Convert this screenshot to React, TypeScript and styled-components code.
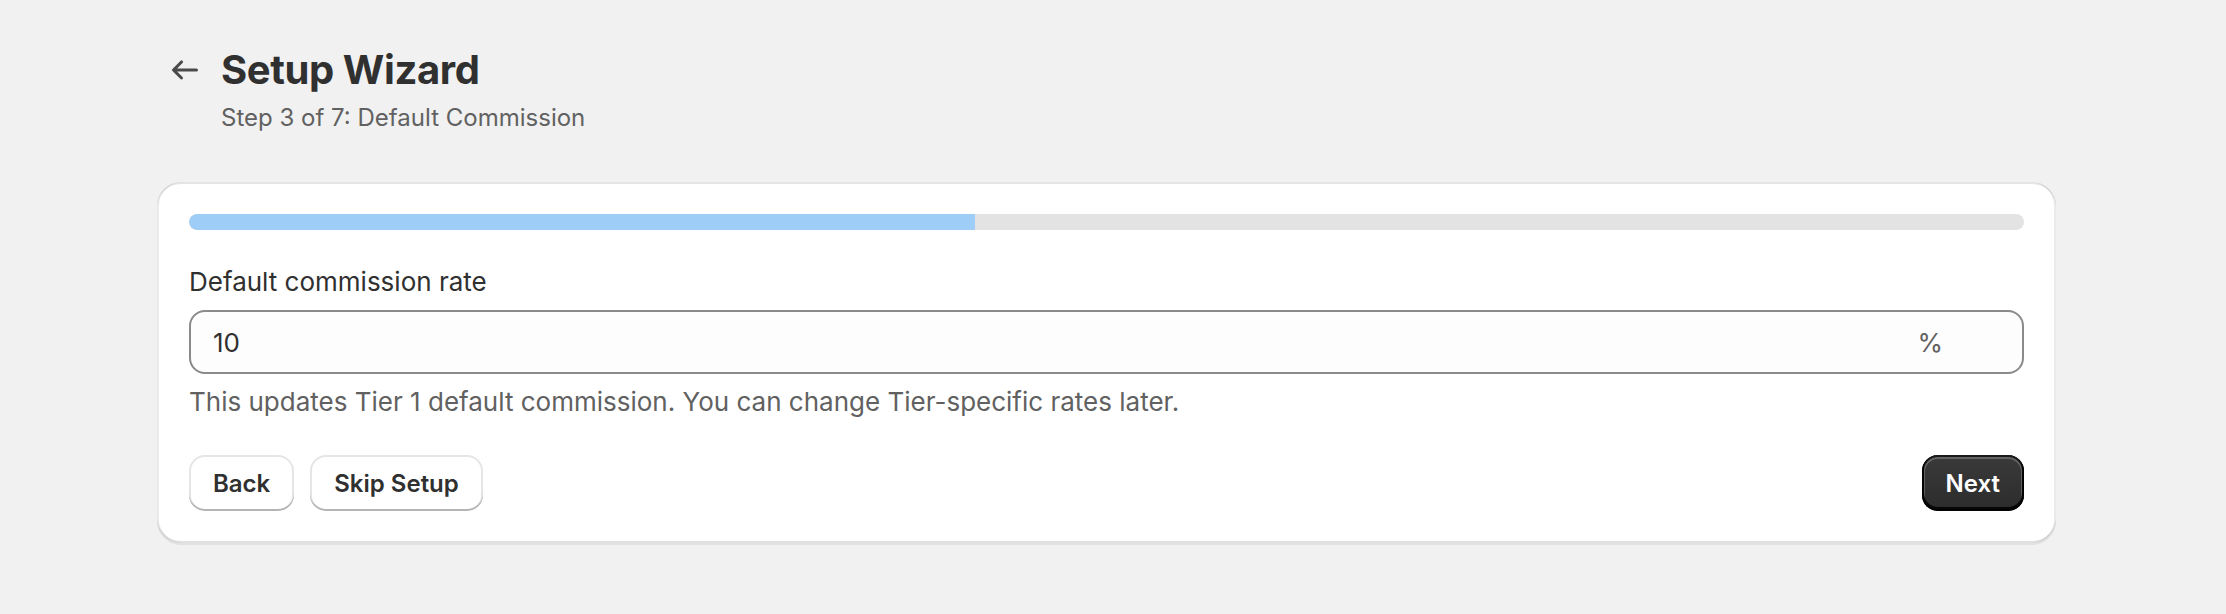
import * as React from 'react';
import styled, { createGlobalStyle } from 'styled-components';

const INK = '#303030';
const SUBDUED = '#616161';

const GlobalStyle = createGlobalStyle`
  html, body {
    margin: 0;
    padding: 0;
    background: #f1f1f1;
  }

  body {
    font-family: Inter, 'Noto Sans', 'Liberation Sans', sans-serif;
    color: ${INK};
    -webkit-font-smoothing: antialiased;
  }
`;

const Page = styled.main`
  box-sizing: border-box;
  padding: 42px 0 40px 157px;
  width: 2056px;
`;

const Header = styled.header`
  display: flex;
  align-items: flex-start;
  gap: 8px;
  margin-bottom: 48px;
`;

const BackAction = styled.button`
  display: flex;
  align-items: center;
  justify-content: center;
  width: 56px;
  height: 56px;
  padding: 0;
  border: none;
  border-radius: 16px;
  background: transparent;
  color: #4a4a4a;
  cursor: pointer;

  svg {
    width: 40px;
    height: 40px;
    fill: currentColor;
  }
`;

const TitleBlock = styled.div`
  display: flex;
  flex-direction: column;
  gap: 8px;
  margin-top: 4px;
`;

const Title = styled.h1`
  margin: 0;
  font-size: 40px;
  line-height: 48px;
  font-weight: 700;
  letter-spacing: -0.4px;
  color: ${INK};
`;

const Subtitle = styled.p`
  margin: 0;
  font-size: 24px;
  line-height: 32px;
  color: ${SUBDUED};
`;

const Card = styled.section`
  box-sizing: border-box;
  display: flex;
  flex-direction: column;
  padding: 32px;
  border-radius: 24px;
  background: #ffffff;
  box-shadow:
    0 2px 0 0 rgba(26, 26, 26, 0.07),
    inset 2px 0 0 0 rgba(0, 0, 0, 0.08),
    inset -2px 0 0 0 rgba(0, 0, 0, 0.08),
    inset 0 -2px 0 0 rgba(0, 0, 0, 0.12),
    inset 0 2px 0 0 rgba(204, 204, 204, 0.5);
`;

const Track = styled.div`
  height: 16px;
  border-radius: 8px;
  background: #e3e3e3;
  overflow: hidden;
  margin-bottom: 32px;
`;

const Fill = styled.div`
  height: 100%;
  border-radius: 8px 0 0 8px;
  background: #9ecdf8;
`;

const Field = styled.div`
  display: flex;
  flex-direction: column;
  gap: 8px;
`;

const Label = styled.label`
  font-size: 26px;
  line-height: 40px;
  color: ${INK};
`;

const InputWrap = styled.div`
  box-sizing: border-box;
  display: flex;
  align-items: center;
  height: 64px;
  padding: 0 79px 0 22px;
  border: 2px solid #8a8a8a;
  border-radius: 16px;
  background: #fdfdfd;
`;

const Input = styled.input`
  flex: 1;
  min-width: 0;
  border: none;
  outline: none;
  background: transparent;
  font-family: inherit;
  font-size: 26px;
  color: ${INK};
  padding: 0;
`;

const Suffix = styled.span`
  font-size: 26px;
  color: ${SUBDUED};
`;

const Help = styled.p`
  margin: 0;
  font-size: 26px;
  line-height: 40px;
  color: ${SUBDUED};
`;

const Actions = styled.div`
  display: flex;
  align-items: center;
  justify-content: space-between;
  margin-top: 33px;
`;

const Group = styled.div`
  display: flex;
  gap: 16px;
`;

const Button = styled.button<{ $primary?: boolean }>`
  box-sizing: border-box;
  height: 56px;
  padding: 0 24px;
  border: none;
  border-radius: 16px;
  font-family: inherit;
  font-size: 24px;
  font-weight: 600;
  cursor: pointer;
  color: ${(p) => (p.$primary ? '#ffffff' : INK)};
  background: ${(p) =>
    p.$primary ? 'linear-gradient(180deg, #3a3a3a 0%, #2c2c2c 100%)' : '#ffffff'};
  box-shadow: ${(p) =>
    p.$primary
      ? 'inset 0 -2px 0 2px rgba(0,0,0,0.85), inset 0 0 0 2px #1a1a1a, inset 0 1px 0 3px rgba(255,255,255,0.22)'
      : 'inset 0 -2px 0 0 #b5b5b5, inset 0 0 0 2px rgba(0,0,0,0.1), inset 0 1px 0 3px #ffffff'};
`;

const STEP = 3;
const TOTAL = 7;

export default function App(): JSX.Element {
  const [rate, setRate] = React.useState('10');

  return (
    <>
      <GlobalStyle />
      <Page>
        <Header>
          <BackAction aria-label="Back">
            <svg viewBox="0 0 20 20">
              <path d="M16.5 10a.75.75 0 0 1-.75.75h-9.69l2.72 2.72a.75.75 0 0 1-1.06 1.06l-4-4a.75.75 0 0 1 0-1.06l4-4a.75.75 0 1 1 1.06 1.06l-2.72 2.72h9.69a.75.75 0 0 1 .75.75Z" />
            </svg>
          </BackAction>
          <TitleBlock>
            <Title>Setup Wizard</Title>
            <Subtitle>
              Step {STEP} of {TOTAL}: Default Commission
            </Subtitle>
          </TitleBlock>
        </Header>

        <Card>
          <Track>
            <Fill style={{ width: `${(STEP / TOTAL) * 100}%` }} />
          </Track>

          <Field>
            <Label htmlFor="rate">Default commission rate</Label>
            <InputWrap>
              <Input id="rate" value={rate} onChange={(e) => setRate(e.target.value)} />
              <Suffix>%</Suffix>
            </InputWrap>
            <Help>This updates Tier 1 default commission. You can change Tier-specific rates later.</Help>
          </Field>

          <Actions>
            <Group>
              <Button>Back</Button>
              <Button>Skip Setup</Button>
            </Group>
            <Button $primary>Next</Button>
          </Actions>
        </Card>
      </Page>
    </>
  );
}
